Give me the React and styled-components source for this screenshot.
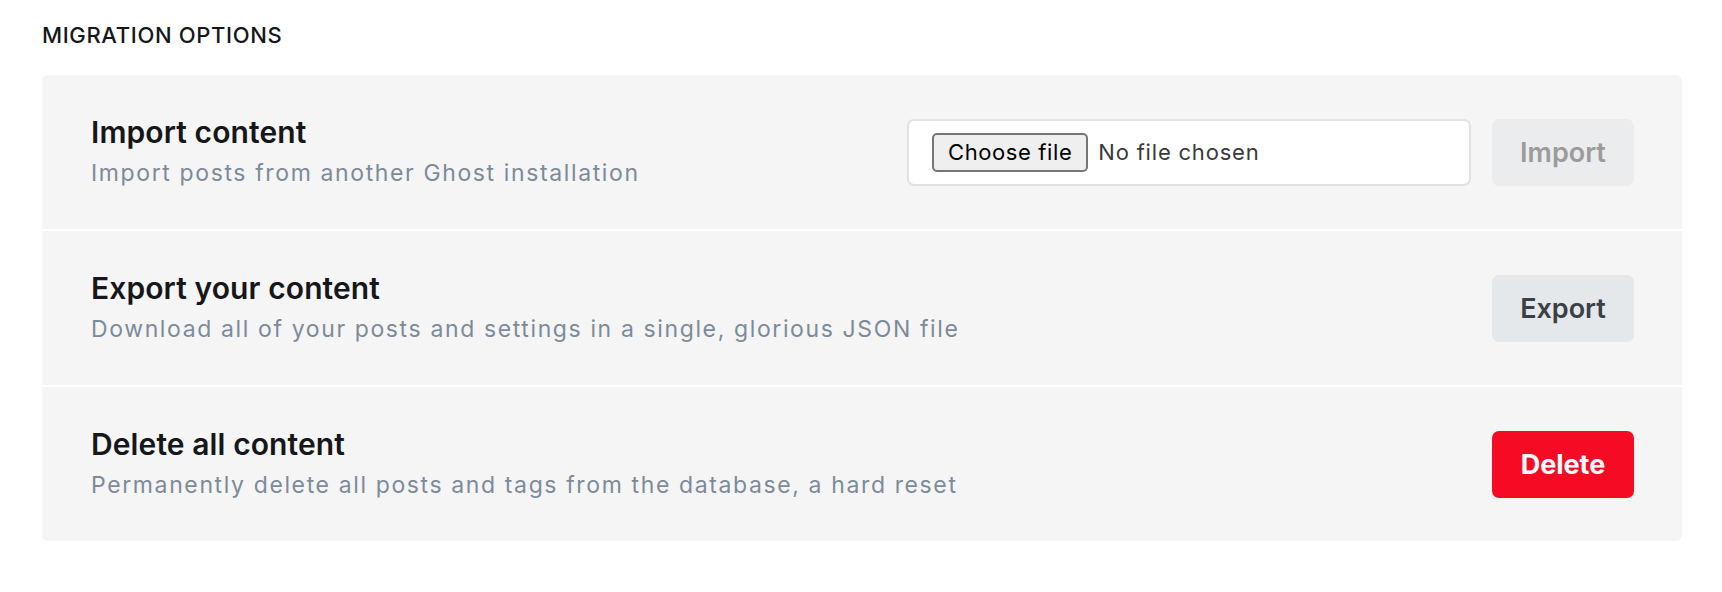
import React from 'react';
import styled, { createGlobalStyle } from 'styled-components';

const GlobalStyle = createGlobalStyle`
  body {
    margin: 0;
    background: #fff;
    font-family: Inter, "Noto Sans", "Liberation Sans", sans-serif;
    color: #15171a;
  }
`;

const Page = styled.div`
  padding: 22px 40px 40px 42px;
`;

const SectionHeader = styled.h4`
  margin: 0 0 27px;
  font-size: 22px;
  line-height: 26px;
  font-weight: 500;
  letter-spacing: 0.65px;
  text-transform: uppercase;
  color: #15171a;
`;

const Panel = styled.div`
  background: #f5f5f5;
  border-radius: 6px;
  overflow: hidden;
`;

const Row = styled.div`
  display: flex;
  align-items: center;
  justify-content: space-between;
  height: 154px;
  padding: 0 48px 0 49px;

  & + & {
    border-top: 2px solid #fff;
  }
`;

const Info = styled.div`
  display: flex;
  flex-direction: column;
  gap: 4px;
  margin-top: -2px;
`;

const Title = styled.h3`
  margin: 0;
  font-size: 30px;
  line-height: 39px;
  font-weight: 600;
  letter-spacing: 0.1px;
  color: #15171a;
`;

const Description = styled.p`
  margin: 0;
  font-size: 23px;
  line-height: 34px;
  letter-spacing: 1.62px;
  color: #7c8b9a;
`;

const Actions = styled.div`
  display: flex;
  align-items: center;
  gap: 21px;
`;

const FileField = styled.label`
  display: flex;
  align-items: center;
  gap: 10px;
  box-sizing: border-box;
  width: 564px;
  height: 67px;
  padding: 0 23px;
  background: #fff;
  border: 2px solid #e2e2e2;
  border-radius: 7px;
  cursor: pointer;

  input {
    display: none;
  }
`;

const ChooseButton = styled.span`
  display: inline-flex;
  align-items: center;
  box-sizing: border-box;
  height: 39px;
  padding: 0 14px;
  background: #efefef;
  border: 2px solid #767676;
  border-radius: 5px;
  font-size: 22px;
  letter-spacing: 0.6px;
  color: #000;
`;

const FileName = styled.span`
  font-size: 22px;
  letter-spacing: 0.8px;
  color: #3a3a3a;
`;

const variants = {
  disabled: { bg: '#ebecee', fg: '#9b9b9b', weight: 600 },
  normal: { bg: '#e5e8ea', fg: '#3b4046', weight: 600 },
  danger: { bg: '#f50b23', fg: '#fff', weight: 700 },
};

const Button = styled.button`
  width: 142px;
  height: 67px;
  border: none;
  border-radius: 7px;
  font-family: inherit;
  font-size: 27px;
  font-weight: ${(p) => variants[p.$kind].weight};
  background: ${(p) => variants[p.$kind].bg};
  color: ${(p) => variants[p.$kind].fg};
  cursor: ${(p) => (p.$kind === 'disabled' ? 'default' : 'pointer')};
`;

const App = () => {
  return (
    <Page>
      <GlobalStyle />
      <SectionHeader>Migration options</SectionHeader>
      <Panel>
        <Row>
          <Info>
            <Title>Import content</Title>
            <Description>Import posts from another Ghost installation</Description>
          </Info>
          <Actions>
            <FileField>
              <input type="file" />
              <ChooseButton>Choose file</ChooseButton>
              <FileName>No file chosen</FileName>
            </FileField>
            <Button $kind="disabled" disabled>Import</Button>
          </Actions>
        </Row>

        <Row>
          <Info>
            <Title>Export your content</Title>
            <Description>Download all of your posts and settings in a single, glorious JSON file</Description>
          </Info>
          <Button $kind="normal">Export</Button>
        </Row>

        <Row>
          <Info>
            <Title>Delete all content</Title>
            <Description>Permanently delete all posts and tags from the database, a hard reset</Description>
          </Info>
          <Button $kind="danger">Delete</Button>
        </Row>
      </Panel>
    </Page>
  );
};

export default App;
